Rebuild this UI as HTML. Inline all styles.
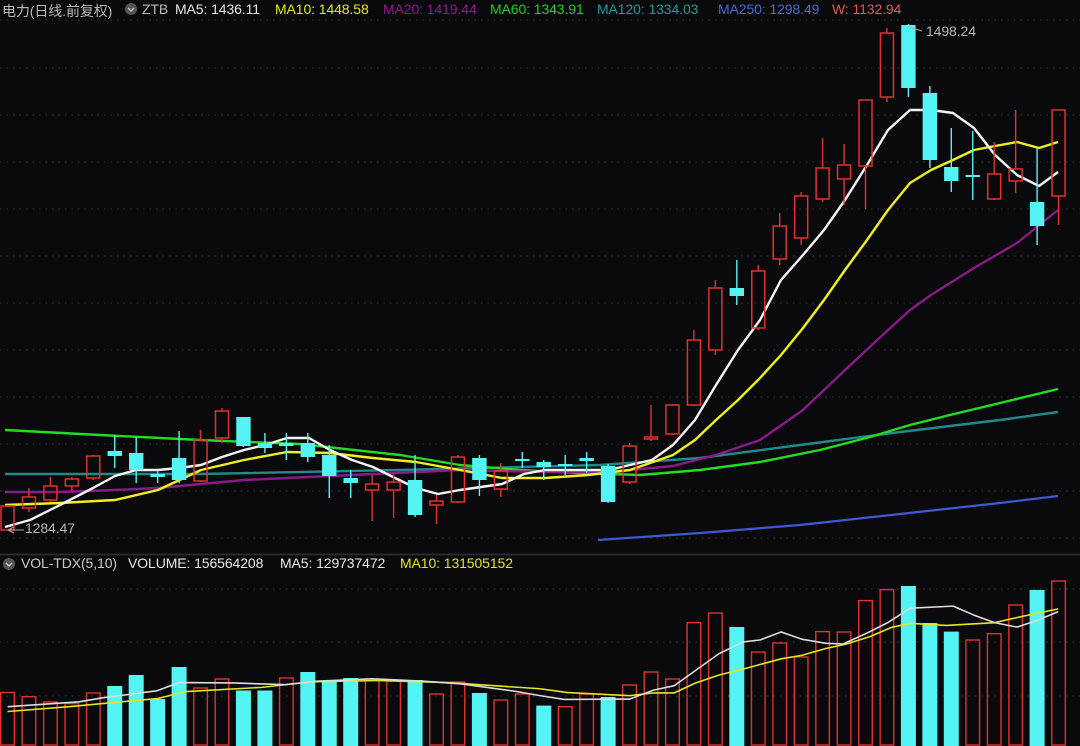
<!DOCTYPE html>
<html><head><meta charset="utf-8">
<style>
html,body{margin:0;padding:0;background:#0a0a0c;}
body{width:1080px;height:746px;overflow:hidden;position:relative;font-family:"Liberation Sans","Noto Sans CJK SC",sans-serif;}
svg{position:absolute;left:0;top:0;}
.hd{position:absolute;font-size:14px;white-space:nowrap;letter-spacing:-0.1px;}
</style></head>
<body>
<svg id="s" width="1080" height="746" viewBox="0 0 1080 746"></svg>
<div class="hd" style="left:2px;top:1px;color:#b8b8b8;">电力(日线.前复权)</div>
<div class="hd" style="left:142px;top:1px;color:#b8b8b8;">ZTB</div>
<div class="hd" style="left:175px;top:1px;color:#e8e8e8;">MA5: 1436.11</div>
<div class="hd" style="left:275px;top:1px;color:#e6e61a;">MA10: 1448.58</div>
<div class="hd" style="left:383px;top:1px;color:#8c1c8c;">MA20: 1419.44</div>
<div class="hd" style="left:490px;top:1px;color:#1ed21e;">MA60: 1343.91</div>
<div class="hd" style="left:597px;top:1px;color:#239a9a;">MA120: 1334.03</div>
<div class="hd" style="left:718px;top:1px;color:#4a6ad2;">MA250: 1298.49</div>
<div class="hd" style="left:832px;top:1px;color:#e05a5a;">W: 1132.94</div>
<div class="hd" style="left:926px;top:23px;color:#b8b8b8;">1498.24</div>
<div class="hd" style="left:25px;top:520px;color:#b8b8b8;">1284.47</div>
<div class="hd" style="left:21px;top:555px;color:#c8c8c8;">VOL-TDX(5,10)</div>
<div class="hd" style="left:128px;top:555px;color:#e8e8e8;">VOLUME: 156564208</div>
<div class="hd" style="left:280px;top:555px;color:#e8e8e8;">MA5: 129737472</div>
<div class="hd" style="left:400px;top:555px;color:#e6e61a;">MA10: 131505152</div>
<script>
var s=document.getElementById('s'),h='';
function L(x1,y1,x2,y2,c,w,d){h+='<line x1="'+x1+'" y1="'+y1+'" x2="'+x2+'" y2="'+y2+'" stroke="'+c+'" stroke-width="'+w+'"'+(d?' stroke-dasharray="'+d+'"':'')+'/>';}
function P(pts,c,w){h+='<polyline fill="none" stroke="'+c+'" stroke-width="'+w+'" stroke-linejoin="round" points="'+pts.map(function(p){return p[0]+','+p[1]}).join(' ')+'"/>';}
[20,68,115,162,209,256,303,350,397,444,491,538].forEach(function(y){L(0,y,1080,y,'#333','1','1.5 5');});
[589,642,696].forEach(function(y){L(0,y,1080,y,'#333','1','1.5 5');});
L(0,554.5,1080,554.5,'#2a2a2e',2);
h+='<circle cx="131" cy="9" r="6" fill="#555"/><path d="M128 8 L131 11 L134 8" stroke="#ccc" stroke-width="1.3" fill="none"/>';
h+='<circle cx="9" cy="564" r="6" fill="#555"/><path d="M6 563 L9 566 L12 563" stroke="#ccc" stroke-width="1.3" fill="none"/>';
var cx=function(i){return 7.5+21.45*i;};
P([[598,540],[700,533],[800,525],[900,514],[1000,503],[1058,496]],'#3c5ad2',2.2);
P([[5,474],[200,474],[400,470],[600,465],[700,458],[800,445],[900,432],[1000,420],[1058,412]],'#1f8a8a',2.4);
P([[5,430],[100,435],[200,440],[300,444],[400,455],[460,465],[520,470],[580,473],[640,475],[700,470],[760,462],[820,450],[870,437],[910,425],[950,415],[1000,403],[1058,389]],'#22dd22',2.4);
P([[5,492],[60,492],[115,490],[158,488],[201,484],[244,480],[287,478],[330,476],[373,474],[416,472],[460,470],[502,471],[545,472],[588,472],[630,470],[673,466],[716,455],[760,440],[803,410],[845,370],[888,330],[910,310],[931,295],[974,268],[1017,243],[1058,210]],'#8a1a8a',2.4);
P([[5,505],[60,503],[115,500],[158,490],[201,470],[244,460],[287,452],[330,453],[373,458],[416,462],[460,470],[502,478],[545,478],[588,475],[630,470],[673,455],[695,440],[716,420],[738,400],[760,378],[781,355],[803,328],[824,300],[845,270],[867,240],[888,210],[910,183],[931,170],[953,160],[974,150],[995,146],[1017,142],[1039,148],[1058,142]],'#f0f020',2.4);
P([[5,527],[30,520],[60,505],[93,488],[115,476],[136,470],[158,470],[179,468],[201,465],[222,457],[244,450],[265,445],[287,438],[309,438],[330,450],[352,460],[373,467],[395,478],[416,488],[438,494],[460,490],[481,487],[502,484],[524,474],[545,470],[567,470],[588,470],[609,470],[630,465],[652,460],[673,445],[695,420],[716,385],[738,350],[760,320],[781,280],[803,255],[824,230],[845,200],[867,165],[888,130],[910,110],[931,110],[953,113],[974,128],[995,155],[1017,175],[1039,186],[1058,172]],'#f4f4f4',2.4);
var C=[[506,530,506,530,1],[497,508,488,512,1],[486,500,477,502,1],[479,486,477,492,1],[456,478,455,480,1],[451,456,435,468,0],[453,470,437,483,0],[474,477,470,483,0],[458,480,431,483,0],[440,481,430,482,1],[411,438,408,443,1],[417,446,417,447,0],[443,448,433,453,0],[443,446,433,460,0],[443,457,433,462,0],[455,476,445,498,0],[478,483,470,498,0],[484,490,475,521,1],[482,490,473,518,1],[480,515,455,517,0],[501,505,495,524,1],[457,502,455,503,1],[458,480,455,496,0],[471,489,463,497,1],[459,461,452,468,0],[462,467,460,480,0],[464,466,455,475,0],[458,461,452,473,0],[466,502,464,503,0],[446,482,443,484,1],[437,439,405,441,1],[405,434,404,435,1],[340,405,330,406,1],[288,350,280,355,1],[288,296,260,305,0],[271,328,265,330,1],[226,259,213,265,1],[196,238,192,245,1],[168,199,138,202,1],[165,179,144,205,1],[100,166,100,209,1],[33,97,28,102,1],[25,88,24,97,0],[93,160,86,168,0],[167,181,128,192,0],[175,177,131,200,0],[174,199,142,200,1],[169,181,110,193,1],[202,226,148,245,0],[110,196,110,225,1]];
var RED='#e0312f',CY='#55f4f4';
C.forEach(function(c,i){var x=cx(i),col=c[4]?RED:CY;
 if(c[4]){L(x,c[2],x,c[0],col,1.4);L(x,c[1],x,c[3],col,1.4);
  h+='<rect x="'+(x-6.5)+'" y="'+c[0]+'" width="13" height="'+Math.max(c[1]-c[0],1)+'" fill="none" stroke="'+col+'" stroke-width="1.5"/>';}
 else{L(x,c[2],x,c[3],col,1.4);
  h+='<rect x="'+(x-7.2)+'" y="'+c[0]+'" width="14.4" height="'+Math.max(c[1]-c[0],1.6)+'" fill="'+col+'"/>';}
});
h+='<path d="M909 27 L922 31" stroke="#aaa" stroke-width="1" fill="none"/><path d="M8 530 L14 527 M8 530 L14 533 M8 530 L24 530" stroke="#aaa" stroke-width="1" fill="none"/>';
var V=[[692.5,1],[696.7,1],[702,1],[703.6,1],[693,1],[686,0],[675,0],[699,0],[667,0],[688,1],[679,1],[690.5,0],[690.5,0],[678,1],[672,0],[681,0],[678,0],[679,1],[681,1],[680,0],[694,1],[682,1],[693,0],[700,1],[694,1],[705.6,0],[706.7,1],[694,1],[697,0],[685,1],[672,1],[679,1],[622.6,1],[613,1],[627,0],[652,1],[643,1],[657,1],[631.6,1],[632,1],[600.6,1],[589.6,1],[586,0],[623,0],[631.6,0],[640,1],[633.7,1],[605,1],[590,0],[581,1]];
V.forEach(function(v,i){var x=cx(i);
 if(v[1])h+='<rect x="'+(x-6.8)+'" y="'+v[0]+'" width="13.6" height="'+(745-v[0])+'" fill="none" stroke="'+RED+'" stroke-width="1.4"/>';
 else h+='<rect x="'+(x-7.5)+'" y="'+v[0]+'" width="15" height="'+(746-v[0])+'" fill="'+CY+'"/>';});
var k=2.904;
function cv(a,ox){return a.map(function(p){return [ox+p[0]/k,540+p[1]/k];});}
var w1=cv([[22,484],[230,470],[300,458],[455,438],[520,414],[680,415],[760,418],[830,420],[920,410],[1080,403],[1230,410],[1340,418],[1500,440],[1568,452]],0).concat(cv([[70,463],[260,462],[330,436],[390,423],[450,380],[520,330],[590,296],[640,290],[700,267],[760,288],[830,300],[880,302],[950,270],[1010,240],[1075,198],[1200,192],[1260,218],[1320,240],[1385,253],[1440,235],[1505,208]],540));
var y1=cv([[22,498],[200,484],[460,460],[540,440],[760,428],[900,412],[1100,408],[1300,414],[1568,432]],0).concat(cv([[80,443],[260,452],[330,444],[390,444],[450,416],[520,392],[590,375],[700,345],[760,335],[830,315],[890,302],[960,280],[1020,254],[1075,242],[1180,248],[1320,240],[1400,222],[1505,200]],540));
P(y1,'#e6e620',1.6);P(w1,'#dcdcdc',1.6);
s.innerHTML=h;
</script>
</body></html>
